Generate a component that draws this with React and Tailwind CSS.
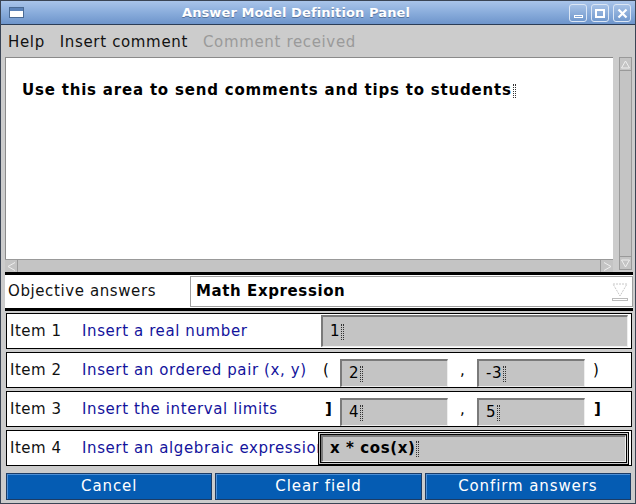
const FONT = "font-['DejaVu_Sans',sans-serif]"

function TitleBar() {
  return (
    <div className="relative h-[24px] shrink-0 bg-gradient-to-b from-[#a9c4e9] via-[#8aaddc] to-[#6e95cb] border-b border-[#2b3d57] flex items-center justify-center pr-[44px]">
      <div className="absolute left-[8px] top-[6px] w-[15px] h-[11px] bg-white border border-[#4a6a94]">
        <div className="h-[3px] bg-[#5b82b8]" />
      </div>
      <span className="text-white font-bold text-[13px] tracking-[0.1px] [text-shadow:0_1px_0_#55729c]">Answer Model Definition Panel</span>
      <div className="absolute right-[4px] top-[3px] flex gap-[4px]">
        {['min', 'max', 'close'].map((k) => (
          <div key={k} className="w-[18px] h-[18px] rounded-[3px] border border-[#dbe6f5] bg-gradient-to-b from-[#a6c1e6] to-[#7299ce] flex items-center justify-center">
            {k === 'min' && <div className="w-[9px] h-[3px] border border-white mt-[6px]" />}
            {k === 'max' && <div className="w-[10px] h-[9px] border-2 border-white" />}
            {k === 'close' && (
              <svg width="11" height="11" viewBox="0 0 11 11">
                <path d="M1.5 1.5 L9.5 9.5 M9.5 1.5 L1.5 9.5" stroke="white" strokeWidth="2.2" />
              </svg>
            )}
          </div>
        ))}
      </div>
    </div>
  )
}

function Field({ value, className = '', bold = false }) {
  return (
    <div className={`bg-[#c4c4c4] border-t-2 border-l-2 border-[#7a7a7a] border-b border-r border-b-[#eeeeee] border-r-[#eeeeee] flex items-center pl-[7px] ${className}`}>
      <span className={`text-[15px] text-black ${bold ? 'font-bold tracking-[0.6px]' : 'tracking-[0.6px]'}`}>{value}</span>
      <span className="ml-[1px] w-[3px] h-[16px] border-x border-dotted border-[#333]" />
    </div>
  )
}

function ItemRow({ n, label, children }) {
  return (
    <div className="h-[36px] bg-white border border-black flex items-center">
      <span className="w-[75px] pl-[3px] text-[15px] tracking-[0.5px] text-[#111]">Item {n}</span>
      <span className="w-[236px] text-[15px] tracking-[0.6px] text-[#13139c] whitespace-nowrap overflow-hidden">{label}</span>
      <div className="flex-1 h-full flex items-center">{children}</div>
    </div>
  )
}

export default function App() {
  return (
    <div className={`w-[636px] h-[504px] bg-[#cccccc] border border-[#3a4454] flex flex-col overflow-hidden ${FONT}`}>
      <TitleBar />

      {/* menu */}
      <div className="h-[32px] shrink-0 flex items-center gap-[15px] pl-[7px] pt-[2px] text-[15px] tracking-[0.65px] text-[#111]">
        <span>Help</span>
        <span>Insert comment</span>
        <span className="text-[#9a9a9a]">Comment received</span>
      </div>

      {/* comment area */}
      <div className="h-[215px] shrink-0 flex pl-[4px] pr-[3px]">
        <div className="w-[608px] flex flex-col">
          <div className="flex-1 bg-white border-t border-l border-[#8a8a8a] pl-[16px] pt-[20px]">
            <span className="font-bold text-[15px] tracking-[0.8px] text-black">Use this area to send comments and tips to students</span>
            <span className="inline-block ml-[1px] w-[3px] h-[14px] border-x border-dotted border-[#333] align-middle" />
          </div>
          <div className="h-[13px] flex bg-[#c4c4c4] border-t border-[#999]">
            <div className="w-[13px] border-r border-[#999] flex items-center justify-center">
              <svg width="9" height="9" viewBox="0 0 9 9"><path d="M8 0.5 L1 4.5 L8 8.5" fill="none" stroke="#eee" /></svg>
            </div>
            <div className="flex-1" />
            <div className="w-[13px] border-l border-[#999] flex items-center justify-center">
              <svg width="9" height="9" viewBox="0 0 9 9"><path d="M1 0.5 L8 4.5 L1 8.5" fill="none" stroke="#eee" /></svg>
            </div>
          </div>
        </div>
        <div className="w-[13px] ml-[6px] h-[213px] bg-[#c4c4c4] border border-[#999] flex flex-col justify-between">
          <div className="h-[13px] border-b border-[#999] flex items-center justify-center">
            <svg width="9" height="9" viewBox="0 0 9 9"><path d="M0.5 8 L4.5 1 L8.5 8 Z" fill="none" stroke="#eee" /></svg>
          </div>
          <div className="h-[13px] border-t border-[#999] flex items-center justify-center">
            <svg width="9" height="9" viewBox="0 0 9 9"><path d="M0.5 1 L4.5 8 L8.5 1 Z" fill="none" stroke="#eee" /></svg>
          </div>
        </div>
      </div>

      {/* objective answers */}
      <div className="border-t-[3px] border-black ml-[4px] mr-[2px] h-[39px] shrink-0 bg-white border-b-[3px] border-b-black flex items-center">
        <span className="w-[185px] pl-[3px] text-[15px] tracking-[0.6px] text-[#111]">Objective answers</span>
        <div className="flex-1 h-[31px] border border-[#a0a0a0] flex items-center pl-[5px] pr-[4px]">
          <span className="font-bold text-[15px] tracking-[0.6px] text-black flex-1">Math Expression</span>
          <div className="flex flex-col items-center gap-[1px]">
            <svg width="16" height="14" viewBox="0 0 16 14"><path d="M1 1 L15 1 L8 13 Z" fill="none" stroke="#c8c8c8" strokeDasharray="2 1" /></svg>
            <div className="w-[16px] h-[3px] border border-[#bbb]" />
          </div>
        </div>
      </div>

      {/* items */}
      <div className="flex flex-col gap-[3px] pt-[2px] pl-[5px] pr-[3px]">
        <ItemRow n={1} label="Insert a real number">
          <Field value="1" className="w-[307px] h-[32px] ml-[3px]" />
        </ItemRow>
        <ItemRow n={2} label="Insert an ordered pair (x, y)">
          <span className="w-[22px] pl-[5px] text-[15px]">(</span>
          <Field value="2" className="w-[108px] h-[28px] self-end" />
          <span className="w-[29px] text-center text-[15px]">,</span>
          <Field value="-3" className="w-[108px] h-[28px] self-end" />
          <span className="pl-[8px] text-[15px]">)</span>
        </ItemRow>
        <ItemRow n={3} label="Insert the interval limits">
          <span className="w-[22px] pl-[7px] text-[15px] font-bold">]</span>
          <Field value="4" className="w-[108px] h-[28px] self-end" />
          <span className="w-[29px] text-center text-[15px]">,</span>
          <Field value="5" className="w-[108px] h-[28px] self-end" />
          <span className="pl-[9px] text-[15px] font-bold">]</span>
        </ItemRow>
        <ItemRow n={4} label="Insert an algebraic expression">
          <div className="w-[311px] h-[33px] border border-black p-[1px] bg-[#cccccc]">
            <div className="h-full border border-black">
              <Field value="x * cos(x)" bold className="h-full" />
            </div>
          </div>
        </ItemRow>
      </div>

      {/* buttons */}
      <div className="mt-[7px] flex gap-[3px] pl-[5px] pr-[4px] h-[27px]">
        {['Cancel', 'Clear field', 'Confirm answers'].map((b) => (
          <button key={b} className="flex-1 bg-[#055cb3] border border-[#1b3c66] shadow-[inset_1px_1px_0_#4d8fd6] text-white text-[15px] tracking-[0.9px]">
            {b}
          </button>
        ))}
      </div>
    </div>
  )
}
